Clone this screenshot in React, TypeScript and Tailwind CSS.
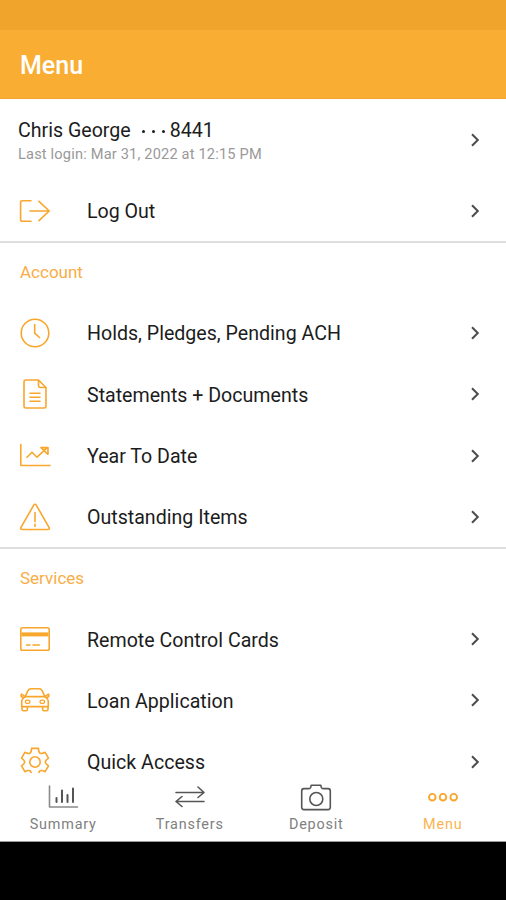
import React, { useState } from 'react';

type IconName = 'logout' | 'clock' | 'document' | 'trend' | 'warning' | 'card' | 'car' | 'gear';

interface MenuItem {
    label: string;
    icon: IconName;
}

interface MenuSection {
    title: string;
    items: MenuItem[];
}

const sections: MenuSection[] = [
    {
        title: 'Account',
        items: [
            { label: 'Holds, Pledges, Pending ACH', icon: 'clock' },
            { label: 'Statements + Documents', icon: 'document' },
            { label: 'Year To Date', icon: 'trend' },
            { label: 'Outstanding Items', icon: 'warning' },
        ],
    },
    {
        title: 'Services',
        items: [
            { label: 'Remote Control Cards', icon: 'card' },
            { label: 'Loan Application', icon: 'car' },
            { label: 'Quick Access', icon: 'gear' },
        ],
    },
];

// All row icons are drawn on a 32x32 grid
const iconShapes: Record<IconName, React.ReactNode> = {
    logout: (
        <>
            <path d="M12 5.7H3.4Q1.6 5.7 1.6 7.5V24.5Q1.6 26.3 3.4 26.3H12" />
            <path d="M11 16H30M20 6.3L30.2 16L20 25.7" />
        </>
    ),
    clock: (
        <>
            <circle cx="16" cy="16" r="13.8" />
            <path d="M15.7 7.5V16.2L20.5 20.5" />
        </>
    ),
    document: (
        <>
            <path d="M19.5 2H7Q5 2 5 4V28Q5 30 7 30H25Q27 30 27 28V9.5L19.5 2V7.5Q19.5 9.5 21.5 9.5H27" />
            <path d="M11 15.2H21M11 19.2H21M11 23.2H21" />
        </>
    ),
    trend: (
        <>
            <path d="M1.8 4.5V25.5H31" />
            <path d="M8 17.2L13 12.2L18 17.2L28 7.8M22 7.6H29V14.3L22 7.6" />
        </>
    ),
    warning: (
        <>
            <path d="M14.6 4.4Q16 2.2 17.4 4.4L30 26.4Q31 28.5 28.8 28.5H3.2Q1 28.5 2 26.4Z" />
            <path d="M16 11.5V20.8M16 23.2V25.4" />
        </>
    ),
    card: (
        <>
            <rect x="1.8" y="4.8" width="28.4" height="22.5" rx="1.8" />
            <path d="M2.5 11.4H29.5" strokeWidth="4" strokeLinecap="butt" />
            <path d="M7.5 22.1H11M14 22.1H20.5" strokeWidth="1.5" />
        </>
    ),
    car: (
        <>
            <path d="M6.2 12.6L8.8 6.8Q9.8 4.8 12 4.8H20Q22.2 4.8 23.2 6.8L25.8 12.6" />
            <path d="M6.5 12.6H25.5Q29.3 14.5 29.3 18V22.6H2.7V18Q2.7 14.5 6.5 12.6Z" />
            <path d="M6 12.4L2.6 10.2Q0.6 12.6 4.7 13.6M26 12.4L29.4 10.2Q31.4 12.6 27.3 13.6" />
            <path d="M3 22.8V25.3Q3 26.8 4.5 26.8H7Q8.4 26.8 8.4 25.3V22.8M23.6 22.8V25.3Q23.6 26.8 25 26.8H27.5Q29 26.8 29 25.3V22.8" />
            <ellipse cx="8.7" cy="17.8" rx="2.3" ry="1.7" strokeWidth="1.2" />
            <ellipse cx="23.3" cy="17.8" rx="2.3" ry="1.7" strokeWidth="1.2" />
        </>
    ),
    gear: (
        <>
            <path d="M12.6 2.4H19.4C19.6 7.6 21.6 8.7 26.1 6.3L29.5 12.1C25.3 15 25.3 17 29.5 19.9L26.1 25.7C21.6 23.3 19.6 24.4 19.4 29.6H12.6C12.4 24.4 10.4 23.3 5.9 25.7L2.5 19.9C6.7 17 6.7 15 2.5 12.1L5.9 6.3C10.4 8.7 12.4 7.6 12.6 2.4Z" />
            <circle cx="16" cy="16" r="5.2" />
        </>
    ),
};

const RowIcon: React.FC<{ name: IconName }> = ({ name }) => (
    <svg
        viewBox="0 0 32 32"
        className="w-8 h-8 shrink-0 text-[#f9a62d]"
        fill="none"
        stroke="currentColor"
        strokeWidth="1.6"
        strokeLinecap="round"
        strokeLinejoin="round"
    >
        {iconShapes[name]}
    </svg>
);

const Chevron: React.FC = () => (
    <svg viewBox="0 0 12 16" className="w-3 h-4 shrink-0 text-[#4c4c4c]" fill="none" stroke="currentColor" strokeWidth="2">
        <path d="M2 2.2L7.8 8L2 13.8" />
    </svg>
);

const MenuRow: React.FC<{ item: MenuItem }> = ({ item }) => (
    <button className="flex h-[61.3px] w-full shrink-0 items-center pl-[19px] pr-[24px] text-left">
        <RowIcon name={item.icon} />
        <span className="ml-9 flex-1 whitespace-nowrap pt-[3px] text-[19.6px] leading-6 text-[#1c1c1c]">{item.label}</span>
        <Chevron />
    </button>
);

const tabs = [
    {
        label: 'Summary',
        icon: (
            <>
                <path d="M2.5 4V25H30.5" stroke="#8a8a8a" />
                <path d="M9.5 16V20M15 8.5V20M20.5 13V20M26 6.5V20" strokeWidth="2" />
            </>
        ),
    },
    {
        label: 'Transfers',
        icon: (
            <>
                <path d="M2 10.5H30M24 5L30 10.5L24 15.5" />
                <path d="M30 19.5H2M8 14.5L2 19.5L8 24.5" />
            </>
        ),
    },
    {
        label: 'Deposit',
        icon: (
            <>
                <path d="M4 6.6H9Q10.5 6.6 10.8 5.1L11.2 3.2H20.8L21.2 5.1Q21.5 6.6 23 6.6H28Q30.3 6.6 30.3 8.9V25.3Q30.3 27.6 28 27.6H4Q1.7 27.6 1.7 25.3V8.9Q1.7 6.6 4 6.6Z" />
                <circle cx="16.3" cy="17" r="6.5" />
            </>
        ),
    },
    {
        label: 'Menu',
        icon: (
            <>
                <circle cx="5.3" cy="15.2" r="3.3" strokeWidth="1.9" />
                <circle cx="16" cy="15.2" r="3.3" strokeWidth="1.9" />
                <circle cx="26.7" cy="15.2" r="3.3" strokeWidth="1.9" />
            </>
        ),
    },
];

export default function App() {
    const [activeTab, setActiveTab] = useState('Menu');

    return (
        <div className="flex h-[900px] w-[506px] flex-col overflow-hidden bg-white font-['Roboto',sans-serif]">
            {/* Status bar + header */}
            <div className="h-[30px] shrink-0 bg-[#f0a42b]" />
            <header className="flex h-[69px] shrink-0 items-center border-b border-[#f4a52b] bg-[#f9ad33] pl-5 pt-1">
                <h1 className="text-[25px] font-medium leading-8 text-white">Menu</h1>
            </header>

            <main className="flex h-[674px] shrink-0 flex-col overflow-hidden">
                <button className="flex h-[81px] w-full shrink-0 items-center pl-[18px] pr-[24px] text-left">
                    <div className="flex-1 pt-[5px]">
                        <div className="flex h-6 items-center whitespace-nowrap text-[19.6px] leading-6 text-[#1c1c1c]">
                            <span>Chris George</span>
                            <span className="ml-[11px] flex gap-[7px]">
                                <i className="h-[3px] w-[3px] rounded-full bg-[#1c1c1c]" />
                                <i className="h-[3px] w-[3px] rounded-full bg-[#1c1c1c]" />
                                <i className="h-[3px] w-[3px] rounded-full bg-[#1c1c1c]" />
                            </span>
                            <span className="ml-[5px]">8441</span>
                        </div>
                        <div className="h-[22px] whitespace-nowrap text-[14.6px] leading-[22px] tracking-[0.18px] text-[#999999]">
                            Last login: Mar 31, 2022 at 12:15 PM
                        </div>
                    </div>
                    <Chevron />
                </button>
                <MenuRow item={{ label: 'Log Out', icon: 'logout' }} />

                {sections.map((section) => (
                    <section key={section.title} className="shrink-0 border-t-2 border-[#dfdfdf]">
                        <h2 className="flex h-[59px] items-center pl-5 text-[17px] text-[#f9ad46]">{section.title}</h2>
                        {section.items.map((item) => (
                            <MenuRow key={item.label} item={item} />
                        ))}
                    </section>
                ))}
            </main>

            {/* Tab bar */}
            <nav className="grid h-[69px] shrink-0 grid-cols-4 border-b border-[#9a9a9a] bg-white">
                {tabs.map((tab) => (
                    <button
                        key={tab.label}
                        onClick={() => setActiveTab(tab.label)}
                        className={`flex flex-col items-center pt-[9px] ${activeTab === tab.label ? 'text-[#f9a62d]' : 'text-[#555555]'}`}
                    >
                        <svg
                            viewBox="0 0 32 32"
                            className="h-8 w-8"
                            fill="none"
                            stroke="currentColor"
                            strokeWidth="1.6"
                            strokeLinecap="round"
                            strokeLinejoin="round"
                        >
                            {tab.icon}
                        </svg>
                        <span className={`mt-px text-[14.4px] leading-5 tracking-[0.8px] ${activeTab === tab.label ? 'text-[#fbb350]' : 'text-[#808080]'}`}>{tab.label}</span>
                    </button>
                ))}
            </nav>

            <div className="flex-1 bg-black" />
        </div>
    );
}
